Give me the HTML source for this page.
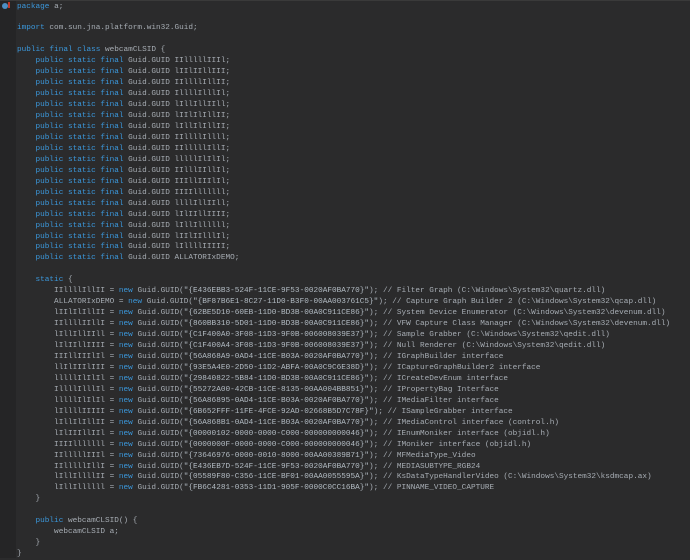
<!DOCTYPE html>
<html><head><meta charset="utf-8"><style>
html,body{margin:0;padding:0;width:690px;height:558px;overflow:hidden;background:#2b2b2c;}
.g{position:absolute;left:0;top:0;width:16px;height:558px;background:#252526;}
.top{position:absolute;left:0;top:0;width:690px;height:1px;background:#3a3a3a;}
pre{position:absolute;left:17px;top:1.5px;margin:0;font-family:"Liberation Mono",monospace;font-size:7.72px;line-height:10.95px;color:#a7adb4;}
.k{color:#3b98dc;}
.s{color:#b3bcc4;}
.icon{position:absolute;left:2px;top:3px;width:6px;height:6px;border-radius:50%;background:#4c8fc4;}
.ic2{position:absolute;left:8px;top:2px;width:2px;height:6px;background:#c0392b;}
</style></head><body>
<div class="g"></div><div class="top"></div>
<div class="icon"></div><div class="ic2"></div>
<pre><span class="k">package</span> a;

<span class="k">import</span> com.sun.jna.platform.win32.Guid;

<span class="k">public final class</span> webcamCLSID {
    <span class="k">public static final</span> Guid.GUID IIlllllIIIl;
    <span class="k">public static final</span> Guid.GUID lIIlIIllIII;
    <span class="k">public static final</span> Guid.GUID IIllllIllII;
    <span class="k">public static final</span> Guid.GUID IllllIlllIl;
    <span class="k">public static final</span> Guid.GUID lIllIllIIll;
    <span class="k">public static final</span> Guid.GUID lIIlIlIllII;
    <span class="k">public static final</span> Guid.GUID lIllIlIllII;
    <span class="k">public static final</span> Guid.GUID IIllllIllll;
    <span class="k">public static final</span> Guid.GUID IIlllllIllI;
    <span class="k">public static final</span> Guid.GUID lllllIlIlIl;
    <span class="k">public static final</span> Guid.GUID IIlllIIllIl;
    <span class="k">public static final</span> Guid.GUID IIIllIIIlIl;
    <span class="k">public static final</span> Guid.GUID IIIIlllllll;
    <span class="k">public static final</span> Guid.GUID llllIllIIll;
    <span class="k">public static final</span> Guid.GUID lIlIIllIIII;
    <span class="k">public static final</span> Guid.GUID lIllIllllll;
    <span class="k">public static final</span> Guid.GUID lIIlIIlllIl;
    <span class="k">public static final</span> Guid.GUID lIllllIIIII;
    <span class="k">public static final</span> Guid.GUID ALLATORIxDEMO;

    <span class="k">static</span> {
        IIllllIllII = <span class="k">new</span> Guid.GUID(<span class="s">"{E436EBB3-524F-11CE-9F53-0020AF0BA770}"</span>); // Filter Graph (C:\Windows\System32\quartz.dll)
        ALLATORIxDEMO = <span class="k">new</span> Guid.GUID(<span class="s">"{BF87B6E1-8C27-11D0-B3F0-00AA003761C5}"</span>); // Capture Graph Builder 2 (C:\Windows\System32\qcap.dll)
        lIIlIlIllII = <span class="k">new</span> Guid.GUID(<span class="s">"{62BE5D10-60EB-11D0-BD3B-00A0C911CE86}"</span>); // System Device Enumerator (C:\Windows\System32\devenum.dll)
        IIllllIIllI = <span class="k">new</span> Guid.GUID(<span class="s">"{860BB310-5D01-11D0-BD3B-00A0C911CE86}"</span>); // VFW Capture Class Manager (C:\Windows\System32\devenum.dll)
        lIllIllIIll = <span class="k">new</span> Guid.GUID(<span class="s">"{C1F400A0-3F08-11D3-9F0B-006008039E37}"</span>); // Sample Grabber (C:\Windows\System32\qedit.dll)
        lIlIIllIIII = <span class="k">new</span> Guid.GUID(<span class="s">"{C1F400A4-3F08-11D3-9F0B-006008039E37}"</span>); // Null Renderer (C:\Windows\System32\qedit.dll)
        IIIllIIIlIl = <span class="k">new</span> Guid.GUID(<span class="s">"{56A868A9-0AD4-11CE-B03A-0020AF0BA770}"</span>); // IGraphBuilder interface
        llIlIIIlIII = <span class="k">new</span> Guid.GUID(<span class="s">"{93E5A4E0-2D50-11D2-ABFA-00A0C9C6E38D}"</span>); // ICaptureGraphBuilder2 interface
        lllllIlIlIl = <span class="k">new</span> Guid.GUID(<span class="s">"{29840822-5B84-11D0-BD3B-00A0C911CE86}"</span>); // ICreateDevEnum interface
        IllllIlllIl = <span class="k">new</span> Guid.GUID(<span class="s">"{55272A00-42CB-11CE-8135-00AA004BB851}"</span>); // IPropertyBag Interface
        lllllIlIlIl = <span class="k">new</span> Guid.GUID(<span class="s">"{56A86895-0AD4-11CE-B03A-0020AF0BA770}"</span>); // IMediaFilter interface
        lIllllIIIII = <span class="k">new</span> Guid.GUID(<span class="s">"{6B652FFF-11FE-4FCE-92AD-02668B5D7C78F}"</span>); // ISampleGrabber interface
        lIllIlIllII = <span class="k">new</span> Guid.GUID(<span class="s">"{56A868B1-0AD4-11CE-B03A-0020AF0BA770}"</span>); // IMediaControl interface (control.h)
        lIlIIIllIIl = <span class="k">new</span> Guid.GUID(<span class="s">"{00000102-0000-0000-C000-000000000046}"</span>); // IEnumMoniker interface (objidl.h)
        IIIIlllllll = <span class="k">new</span> Guid.GUID(<span class="s">"{0000000F-0000-0000-C000-000000000046}"</span>); // IMoniker interface (objidl.h)
        IIlllllIIIl = <span class="k">new</span> Guid.GUID(<span class="s">"{73646976-0000-0010-8000-00AA00389B71}"</span>); // MFMediaType_Video
        IIlllllIllI = <span class="k">new</span> Guid.GUID(<span class="s">"{E436EB7D-524F-11CE-9F53-0020AF0BA770}"</span>); // MEDIASUBTYPE_RGB24
        lIllIllllII = <span class="k">new</span> Guid.GUID(<span class="s">"{05589F80-C356-11CE-BF01-00AA0055595A}"</span>); // KsDataTypeHandlerVideo (C:\Windows\System32\ksdmcap.ax)
        lIllIllllll = <span class="k">new</span> Guid.GUID(<span class="s">"{FB6C4281-0353-11D1-905F-0000C0CC16BA}"</span>); // PINNAME_VIDEO_CAPTURE
    }

    <span class="k">public</span> webcamCLSID() {
        webcamCLSID a;
    }
}</pre>
</body></html>
